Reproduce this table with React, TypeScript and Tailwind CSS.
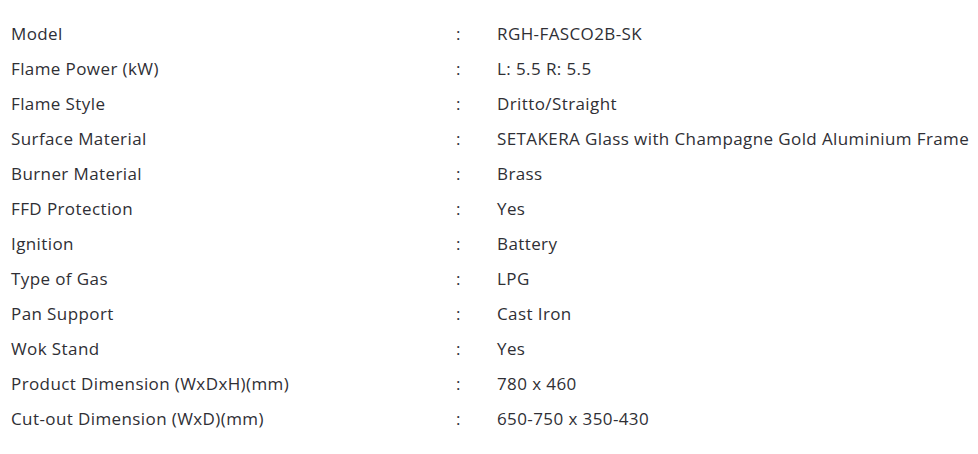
const specs: [string, string][] = [
  ['Model', 'RGH-FASCO2B-SK'],
  ['Flame Power (kW)', 'L: 5.5 R: 5.5'],
  ['Flame Style', 'Dritto/Straight'],
  ['Surface Material', 'SETAKERA Glass with Champagne Gold Aluminium Frame'],
  ['Burner Material', 'Brass'],
  ['FFD Protection', 'Yes'],
  ['Ignition', 'Battery'],
  ['Type of Gas', 'LPG'],
  ['Pan Support', 'Cast Iron'],
  ['Wok Stand', 'Yes'],
  ['Product Dimension (WxDxH)(mm)', '780 x 460'],
  ['Cut-out Dimension (WxD)(mm)', '650-750 x 350-430'],
];

export default function App() {
  return (
    <div className="w-[978px] h-[454px] bg-white pt-[16px] pl-[11px] font-['Open_Sans',sans-serif] text-[17px] tracking-[0.4px] text-[#2f2f35]">
      {specs.map(([label, value]) => (
        <div key={label} className="flex h-[35px] items-center whitespace-nowrap">
          <div className="w-[445px]">{label}</div>
          <div className="w-[41px]">:</div>
          <div>{value}</div>
        </div>
      ))}
    </div>
  );
}
